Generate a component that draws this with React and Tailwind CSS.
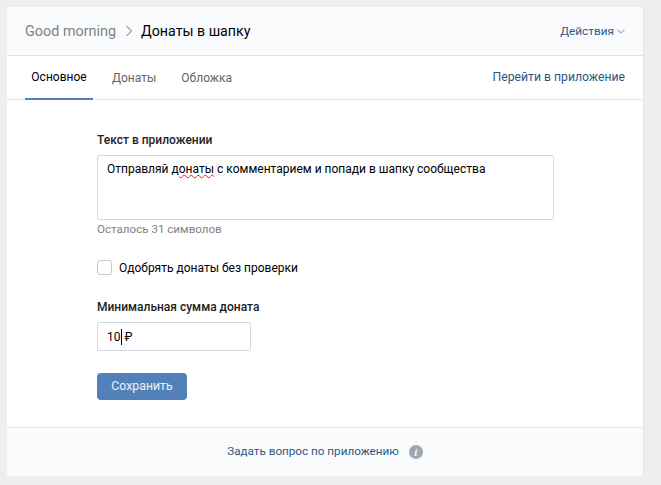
import React from 'react'

const App = () => {
    return (
        <div className="h-[485px] overflow-hidden bg-[#edeef0] pl-[7px] pt-[7px] font-['Roboto',sans-serif] text-[12px] text-black">
            <div className="flex h-[469px] w-[637px] flex-col border-r border-[#e3e4e8] bg-white">
                <div className="flex h-[49px] items-center justify-between border-b border-[#e3e4e8] bg-[#fafbfc] pl-[18px] pr-[18px] pt-px">
                    <div className="flex items-center">
                        <span className="text-[14.4px] text-[#828282]">Good morning</span>
                        <svg className="ml-[9px] mr-[7px]" width="9" height="12" viewBox="0 0 9 12" fill="none" stroke="#a3a8af" strokeWidth="1.3">
                            <path d="M1.5 1l5 5-5 5" />
                        </svg>
                        <span className="text-[14.2px] text-black">Донаты в шапку</span>
                    </div>
                    <div className="flex items-center text-[11.8px] text-[#2a5885]">
                        Действия
                        <svg className="ml-[3px]" width="8" height="5" viewBox="0 0 8 5" fill="none" stroke="#a3adb8" strokeWidth="1.1">
                            <path d="M.5.7l3.5 3.3L7.5.7" />
                        </svg>
                    </div>
                </div>
                <div className="flex h-[44px] items-stretch justify-between border-b border-[#e3e4e8] pl-[18px] pr-[18px]">
                    <div className="flex">
                        <div className="-mb-px flex w-[68px] items-center justify-center border-b-2 border-[#5181b8] text-black">Основное</div>
                        <div className="ml-[19px] flex items-center text-[#656565]">Донаты</div>
                        <div className="ml-[25px] flex items-center text-[#656565]">Обложка</div>
                    </div>
                    <div className="flex items-center text-[12.2px] text-[#2a5885]">Перейти в приложение</div>
                </div>
                <div className="flex-1 pl-[90px] pt-[32px]">
                    <div className="font-medium leading-[16px] text-[#222222]">Текст в приложении</div>
                    <div className="mt-[7px] h-[65px] w-[457px] rounded-[2px] border border-[#d3d9de] px-[9px] py-[5px] leading-[16px]">
                        Отправляй <span className="underline decoration-[#e0201a] decoration-wavy decoration-1">донаты</span> с комментарием и попади в шапку сообщества
                    </div>
                    <div className="mt-[1px] text-[11.6px] leading-[16px] text-[#828282]">Осталось 31 символов</div>
                    <div className="mt-[22px] flex items-center">
                        <div className="h-[15px] w-[15px] rounded-[3px] border border-[#c1c9d1] bg-white"></div>
                        <span className="ml-[7px] pt-px leading-[16px]">Одобрять донаты без проверки</span>
                    </div>
                    <div className="mt-[23px] font-medium leading-[16px] text-[#222222]">Минимальная сумма доната</div>
                    <div className="mt-[7px] flex h-[29px] w-[154px] items-center rounded-[2px] border border-[#d3d9de] pl-[9px]">
                        <span>10</span>
                        <span className="h-[16px] w-px bg-black"></span>
                        <span className="ml-[3px]">₽</span>
                    </div>
                    <button className="mt-[22px] flex h-[27px] w-[90px] items-center justify-center rounded-[4px] bg-[#5181b8] text-[12.3px] text-[#f0f4f8]">Сохранить</button>
                </div>
                <div className="flex h-[49px] items-center justify-center border-t border-[#e3e4e8] bg-[#fafbfc]">
                    <span className="text-[11.7px] text-[#2a5885]">Задать вопрос по приложению</span>
                    <span className="ml-[10px] flex h-[14px] w-[14px] items-center justify-center rounded-full bg-[#a0a6b0] font-['Liberation_Serif',serif] text-[11px] font-bold italic text-white">i</span>
                </div>
            </div>
        </div>
    )
}

export default App
